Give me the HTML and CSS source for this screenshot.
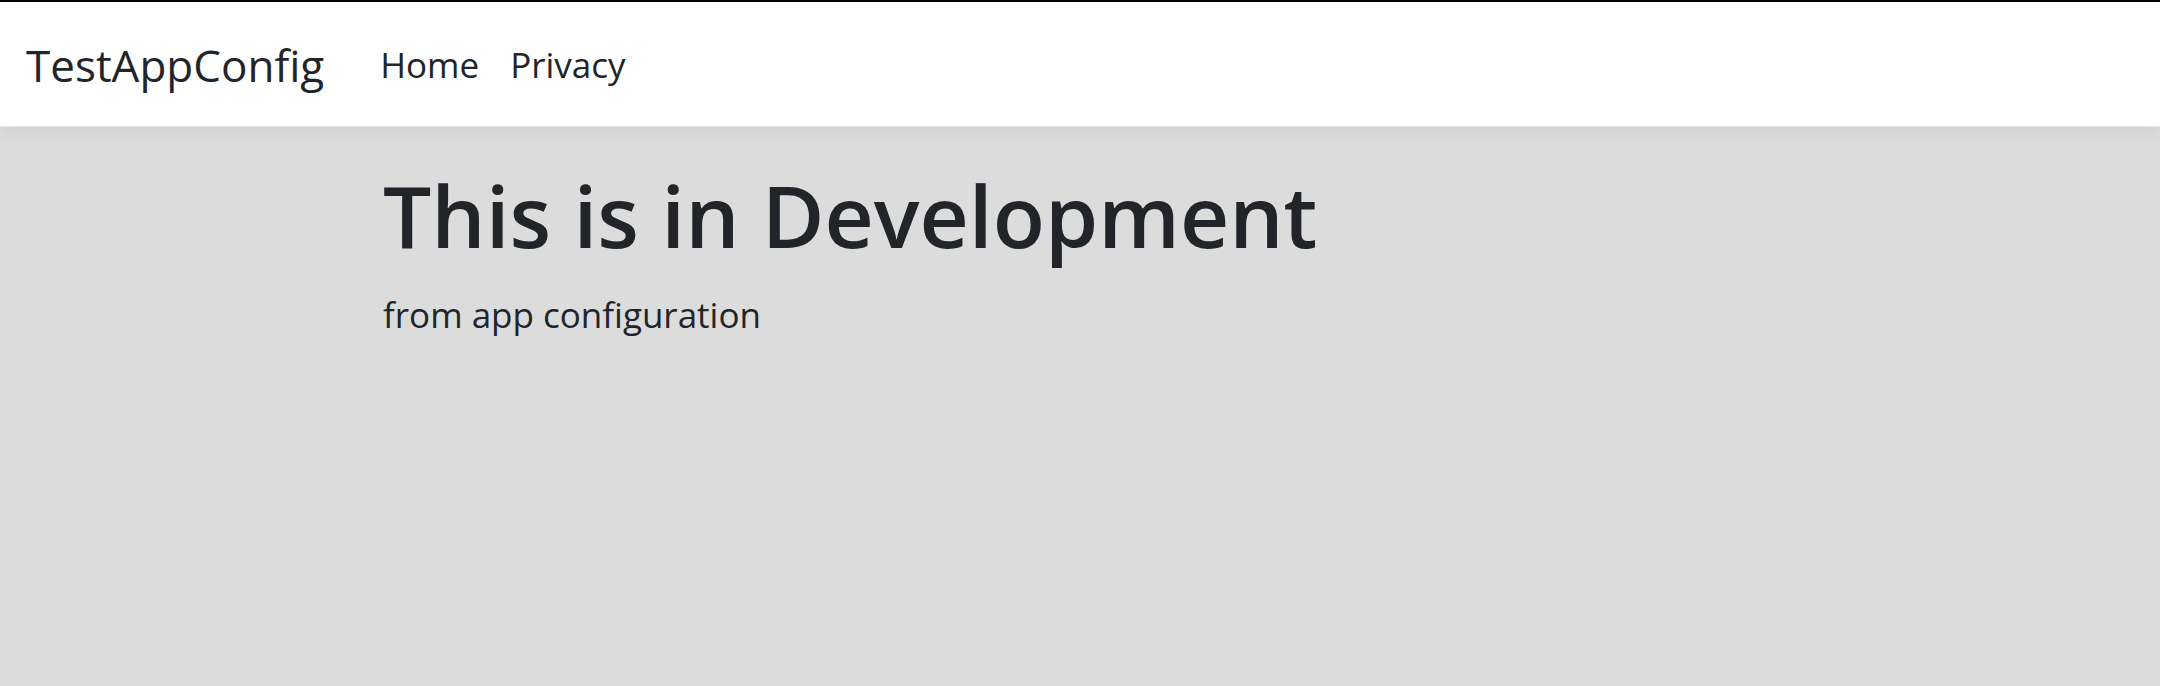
FILE: index.html
```html
<!DOCTYPE html>
<html lang="en">
<head>
<meta charset="utf-8">
<title>TestAppConfig</title>
<link rel="stylesheet" href="styles.css">
</head>
<body>
<header class="navbar">
  <a class="brand" href="#">TestAppConfig</a>
  <nav class="nav">
    <a class="nav-link" href="#">Home</a>
    <a class="nav-link" href="#">Privacy</a>
  </nav>
</header>
<main class="main">
  <h1 class="title">This is in Development</h1>
  <p class="lead">from app configuration</p>
</main>
</body>
</html>
```
FILE: styles.css
```css
html, body {
  margin: 0;
  height: 100%;
}
body {
  background: #dcdcdc;
  color: #212529;
  font-family: "Open Sans", "Noto Sans", sans-serif;
  font-size: 36px;
  line-height: 1.5;
  border-top: 2px solid #000;
  box-sizing: border-box;
}
a {
  color: inherit;
  text-decoration: none;
}
.navbar {
  display: flex;
  align-items: center;
  background: #fff;
  padding: 30px 26px 28px;
  border-bottom: 1px solid #dee2e6;
  box-shadow: 0 6px 18px rgba(0, 0, 0, 0.05);
  position: relative;
}
.brand {
  font-size: 44px;
  line-height: 66px;
  color: #212529;
  margin-right: 56px;
}
.nav {
  display: flex;
  gap: 31px;
}
.nav-link {
  font-size: 35px;
  line-height: 54px;
  color: #212529;
}
.main {
  padding-left: 383px;
}
.title {
  margin: 37px 0 22px;
  font-size: 85.6px;
  font-weight: 600;
  line-height: 1.2;
}
.lead {
  margin: 0;
  font-size: 35px;
  line-height: 1.5;
}
```
